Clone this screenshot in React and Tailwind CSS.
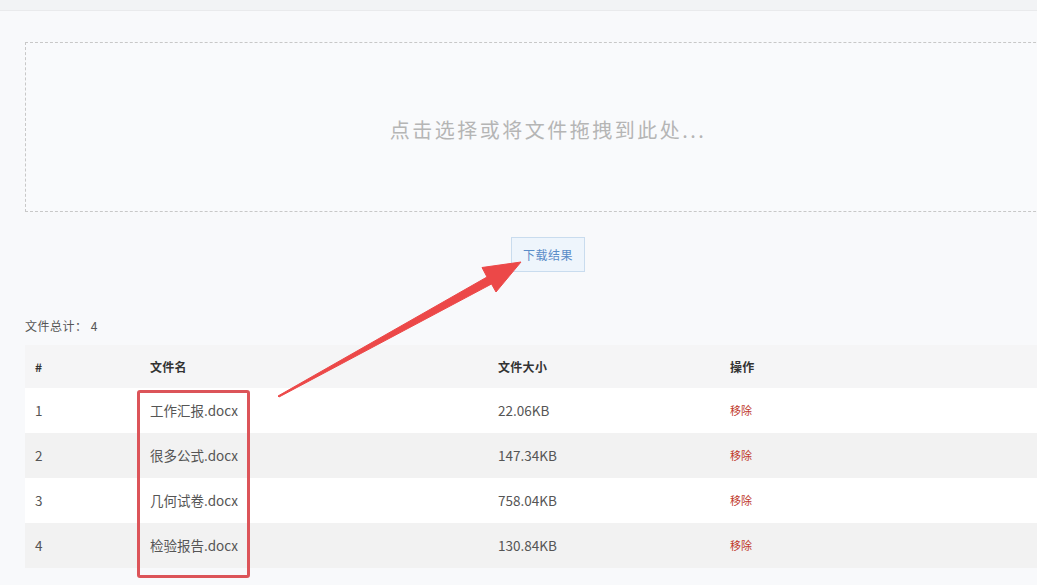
import React from 'react';

const files = [
  { id: 1, name: '工作汇报.docx', size: '22.06KB' },
  { id: 2, name: '很多公式.docx', size: '147.34KB' },
  { id: 3, name: '几何试卷.docx', size: '758.04KB' },
  { id: 4, name: '检验报告.docx', size: '130.84KB' },
];

export default function App() {
  return (
    <div className="relative min-h-[585px] overflow-hidden bg-[#f8f9fb] font-['Noto_Sans_CJK_SC','Noto_Sans',sans-serif]">
      <div className="h-[11px] border-b border-[#e9eaec] bg-[#f2f3f5]"></div>

      <div className="w-[1071px] pl-[25px]">
        {/* upload area */}
        <div className="mt-[31px] flex h-[170px] items-center justify-center border border-dashed border-[#c8c8c8] bg-[#f9fafc]">
          <span className="pt-[6px] text-[20px] tracking-[2.5px] text-[#b5b5b5]">点击选择或将文件拖拽到此处...</span>
        </div>

        <div className="mt-[25px] flex justify-center">
          <button className="h-[35px] w-[74px] border border-[#c9dcee] bg-[#eef5fc] text-[12px] tracking-[0.5px] text-[#5a8cc8]">
            下载结果
          </button>
        </div>

        <div className="mt-[45px] text-[12px] tracking-[0.5px] text-[#555]">文件总计： 4</div>

        {/* file list */}
        <table className="mt-[10px] w-full border-collapse text-left">
          <thead>
            <tr className="h-[43px] bg-[#f5f5f6] text-[12px] tracking-[0.3px] text-[#333]">
              <th className="w-[125px] pl-[10px] font-bold">#</th>
              <th className="w-[348px] font-bold">文件名</th>
              <th className="w-[232px] font-bold">文件大小</th>
              <th className="font-bold">操作</th>
            </tr>
          </thead>
          <tbody>
            {files.map((f, i) => (
              <tr key={f.id} className={i % 2 === 0 ? 'h-[45px] bg-white' : 'h-[45px] bg-[#f2f2f2]'}>
                <td className="pl-[10px] text-[13.5px] text-[#555]">{f.id}</td>
                <td className="text-[13.5px] text-[#555]">{f.name}</td>
                <td className="text-[13.5px] text-[#555]">{f.size}</td>
                <td className="text-[11px] text-[#c0392b]">移除</td>
              </tr>
            ))}
          </tbody>
        </table>
      </div>

      {/* annotation: red box around the file names */}
      <div className="absolute left-[137px] top-[390px] h-[188px] w-[113px] rounded-[3px] border-[3px] border-[#dc5459]"></div>

      {/* annotation: arrow to the download button */}
      <svg className="pointer-events-none absolute left-0 top-0" width="1037" height="585" viewBox="0 0 1037 585">
        <polygon
          points="278,396 487,277 482,267.5 521,262 496,292 491.5,284 279,397"
          fill="#ec4848"
          stroke="#ec4848"
          strokeWidth="1"
          strokeLinejoin="round"
        />
      </svg>
    </div>
  );
}
